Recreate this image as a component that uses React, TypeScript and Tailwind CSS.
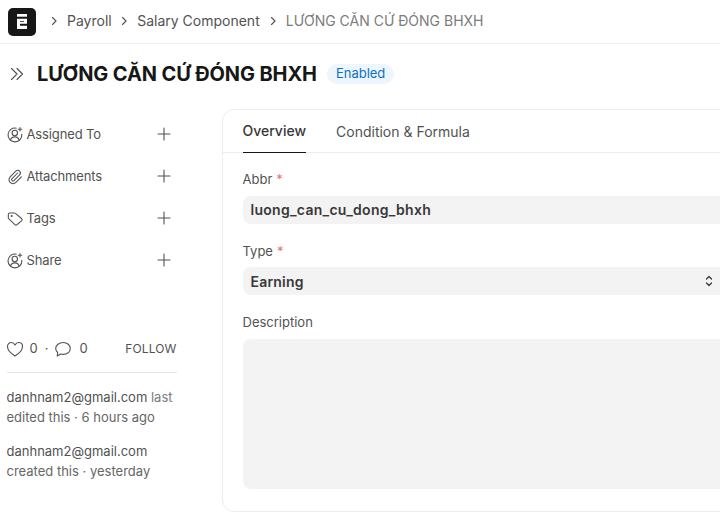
import React from "react";

function UserPlus() {
  return (
    <svg width="16" height="16" viewBox="0 0 16 16" fill="none" stroke="#525252" strokeWidth="1.1" strokeLinecap="round" strokeLinejoin="round">
      <path d="M9.300 1.200A6.900 6.900 0 1 0 14.800 7.200" />
      <circle cx="7.800" cy="6" r="2.700" />
      <path d="M3.500 13.200c.5-2 2.200-3.300 4.300-3.300s3.800 1.300 4.300 3.300" />
      <path d="M13 .6v3.400M11.300 2.300h3.400" />
    </svg>
  );
}
function Clip() {
  return (
    <svg width="16" height="16" viewBox="0 0 24 24" fill="none" stroke="#525252" strokeWidth="1.6" strokeLinecap="round" strokeLinejoin="round">
      <path d="m16 6-8.414 8.586a2 2 0 0 0 2.829 2.829l8.414-8.586a4 4 0 1 0-5.657-5.657l-8.379 8.551a6 6 0 1 0 8.485 8.485l8.379-8.551" />
    </svg>
  );
}
function Tag() {
  return (
    <svg width="16" height="16" viewBox="0 0 24 24" fill="none" stroke="#525252" strokeWidth="1.6" strokeLinecap="round" strokeLinejoin="round">
      <path d="M12.586 3.586A2 2 0 0 0 11.172 3H4a2 2 0 0 0-2 2v5.172a2 2 0 0 0 .586 1.414l9.204 8.704a2.426 2.426 0 0 0 3.420 0l6.580-5.580a2.426 2.426 0 0 0 0-3.420z" />
      <circle cx="7" cy="7.500" r=".8" />
    </svg>
  );
}
function Plus() {
  return (
    <svg width="16" height="16" viewBox="0 0 16 16" fill="none" stroke="#525252" strokeWidth="1.1" strokeLinecap="round">
      <path d="M8 2v12M2 8h12" />
    </svg>
  );
}
function Chevron() {
  return (
    <svg width="8" height="10" viewBox="0 0 8 10" fill="none" stroke="#525252" strokeWidth="1.1" strokeLinecap="round" strokeLinejoin="round">
      <path d="M2.500 1.500 6 5 2.500 8.500" />
    </svg>
  );
}

function SideRow({ icon, label }: { icon: React.ReactNode; label: string }) {
  return (
    <div className="flex items-center h-[42px] w-[165.5px]">
      <div className="w-[20px] flex">{icon}</div>
      <span className="text-[13px] tracking-[-0.01em] text-[#525252]">{label}</span>
      <div className="ml-auto flex mb-[2px]">
        <Plus />
      </div>
    </div>
  );
}

function Field({ label, required, loose, children }: { label: string; required?: boolean; loose?: boolean; children?: React.ReactNode }) {
  return (
    <div className="flex flex-col">
      <div className={loose ? "h-[16px] mb-[8px] flex items-center text-[13px] text-[#525252]" : "h-[16px] mb-[7px] flex items-center text-[13px] text-[#525252]"}>
        {label}
        {required && <span className="text-[#e03636] opacity-70 ml-[4px]">*</span>}
      </div>
      {children}
    </div>
  );
}

export default function App() {
  return (
    <div className="w-[720px] h-[521px] overflow-hidden bg-white font-['Inter',sans-serif]">
      <header className="h-[44px] border-b border-[#ededed] flex items-center pl-[8px]">
        <div className="w-[28px] h-[28px] rounded-[5px] bg-[#171717] flex items-center justify-center">
          <svg className="mb-[1px]" width="10" height="15" viewBox="0 0 10 15" fill="#fff" fillRule="evenodd">
            <path d="M0 0h10v2.700H0z" />
            <path d="M0 4.800h10v4.900H3v2.100h7V15H0zM3 7h4v.8H3z" />
          </svg>
        </div>
        <div className="ml-[14px] mb-[2px] flex items-center text-[14px] text-[#525252] whitespace-nowrap">
          <Chevron />
          <span className="ml-[9px]">Payroll</span>
          <span className="ml-[8.5px]"><Chevron /></span>
          <span className="ml-[9px]">Salary Component</span>
          <span className="ml-[9px]"><Chevron /></span>
          <span className="ml-[9px] text-[#7c7c7c]">LƯƠNG CĂN CỨ ĐÓNG BHXH</span>
        </div>
      </header>

      <div className="h-[65px] flex items-center pl-[10px] pb-[5px]">
        <svg width="14" height="14" viewBox="0 0 14 14" fill="none" stroke="#525252" strokeWidth="1.1" strokeLinecap="round" strokeLinejoin="round">
          <path d="M1.500 1.500 7 7l-5.500 5.500M7 1.500 12.500 7 7 12.500" />
        </svg>
        <h1 className="ml-[13px] text-[20px] font-bold tracking-[-0.12px] text-[#171717] whitespace-nowrap leading-none">LƯƠNG CĂN CỨ ĐÓNG BHXH</h1>
        <span className="ml-[10px] h-[20px] px-[9px] rounded-full bg-[#edf6fd] text-[#0f70c8] text-[13px] flex items-center">Enabled</span>
      </div>

      <div className="flex">
        <aside className="w-[222px] shrink-0 pl-[6.5px]">
          <div className="pt-[5px]">
            <SideRow icon={<UserPlus />} label="Assigned To" />
            <SideRow icon={<Clip />} label="Attachments" />
            <SideRow icon={<Tag />} label="Tags" />
            <SideRow icon={<UserPlus />} label="Share" />
          </div>
          <div className="w-[170px] mt-[55px]">
            <div className="flex items-center h-[24px] text-[13px] text-[#525252]">
              <svg width="16" height="16" viewBox="0 0 16 16" fill="none" stroke="#525252" strokeWidth="1.1" strokeLinejoin="round">
                <path d="M8 15S.500 10.500.500 5.500C.500 3.200 2.200 1.500 4.300 1.500 5.800 1.500 7.200 2.400 8 4 8.800 2.400 10.200 1.500 11.700 1.500 13.800 1.500 15.500 3.200 15.500 5.500 15.500 10.500 8 15 8 15z" />
              </svg>
              <span className="ml-[7px]">0</span>
              <span className="ml-[7px]">·</span>
              <svg className="ml-[7px]" width="16" height="16" viewBox="0 0 16 16" fill="none" stroke="#525252" strokeWidth="1.1" strokeLinejoin="round">
                <path d="M8.300 1.500C4.200 1.500.700 4.100.700 7.500c0 1.600.8 3 2 4L2.200 15l3.400-2c.8.300 1.700.4 2.700.4 3.900 0 7-2.500 7-5.900S12.200 1.500 8.300 1.500z" />
              </svg>
              <span className="ml-[8px]">0</span>
              <span className="ml-auto text-[12px] tracking-[0.01em]">FOLLOW</span>
            </div>
            <div className="border-t border-[#e5e5e5] mt-[11px] pt-[14px] text-[13px] leading-[20px] text-[#666666]">
              <p className="mb-[14px]">
                <span className="text-[#525252]">danhnam2@gmail.com</span> <span className="text-[#7c7c7c]">last</span>
                <br />
                edited this · 6 hours ago
              </p>
              <p>
                <span className="text-[#525252]">danhnam2@gmail.com</span>
                <br />
                created this · yesterday
              </p>
            </div>
          </div>
        </aside>

        <main className="w-[600px] h-[403px] shrink-0 border border-[#ededed] rounded-[12px]">
          <div className="h-[43px] border-b border-[#ededed] flex pl-[19.5px] text-[14px]">
            <div className="h-[43px] border-b border-[#171717] flex items-center font-medium text-[#383838] pb-[2px]">Overview</div>
            <div className="ml-[30px] h-[43px] flex items-center text-[#525252] pb-[1px]">Condition &amp; Formula</div>
          </div>
          <div className="pl-[19.5px] pt-[19px] flex flex-col gap-[20px]">
            <Field label="Abbr" required loose>
              <div className="h-[28px] rounded-l-[8px] bg-[#f3f3f3] flex items-center pl-[8px] pb-[1px] text-[14px] font-semibold tracking-[0.02em] text-[#383838]">luong_can_cu_dong_bhxh</div>
            </Field>
            <Field label="Type" required>
              <div className="h-[28px] w-[477px] rounded-l-[8px] bg-[#f3f3f3] flex items-center pl-[8px] pr-[5px] text-[14px] font-semibold tracking-[0.015em] text-[#383838]">
                Earning
                <svg className="ml-auto" width="12" height="14" viewBox="0 0 12 14" fill="none" stroke="#383838" strokeWidth="1.3" strokeLinecap="round" strokeLinejoin="round">
                  <path d="M3.500 5 6 2.500 8.500 5M3.500 9 6 11.500 8.500 9" />
                </svg>
              </div>
            </Field>
            <Field label="Description" loose>
              <div className="h-[150px] rounded-l-[8px] bg-[#f3f3f3]" />
            </Field>
          </div>
        </main>
      </div>
    </div>
  );
}
